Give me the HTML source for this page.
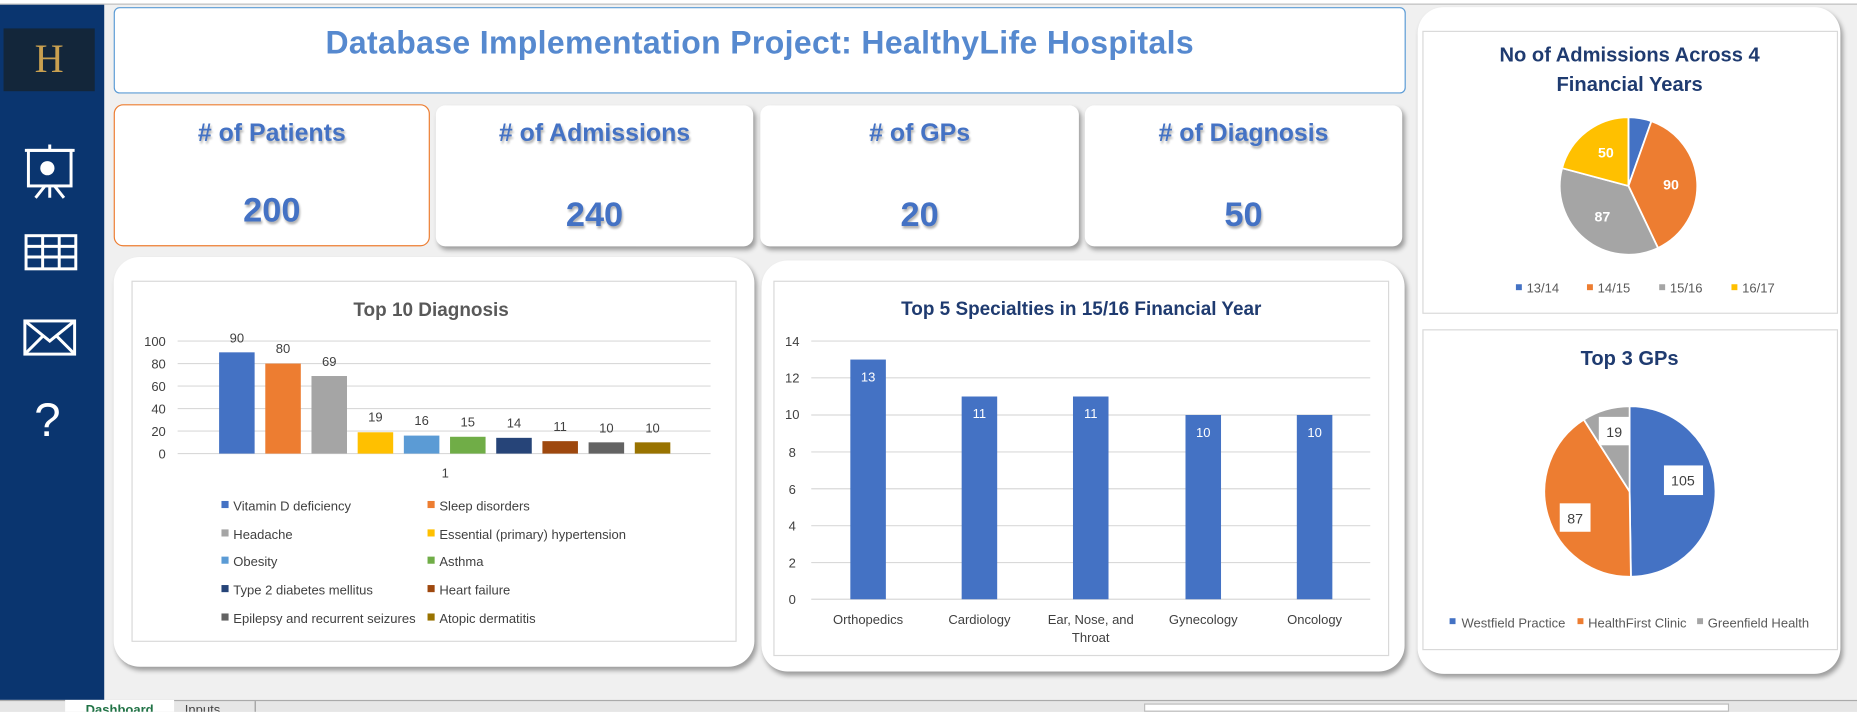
<!DOCTYPE html>
<html><head><meta charset="utf-8"><style>
*{margin:0;padding:0;box-sizing:border-box}
html,body{width:1857px;height:712px;overflow:hidden;background:#f0f0f0;font-family:"Liberation Sans",sans-serif}
#w{position:absolute;left:0;top:0;width:1568px;height:601px;transform:scale(1.18431);transform-origin:0 0;background:#f0f0f0}
.a{position:absolute}
.card{position:absolute;background:#fff;border-radius:8px;box-shadow:2px 3px 4px rgba(0,0,0,.35)}
.kt{position:absolute;left:0;right:0;text-align:center;color:#4472c4;font-weight:bold;text-shadow:1px 2px 2px rgba(0,0,0,.3)}
</style></head><body><div id="w">
<div class="a" style="left:0;top:0;width:1568px;height:4px;background:#fff;border-bottom:1px solid #bbb"></div>
<div class="a" style="left:0;top:4px;width:88px;height:587px;background:#0a356f"></div>
<div class="a" style="left:3px;top:24px;width:77px;height:53px;background:#13263a;color:#c9a050;font-family:'Liberation Serif',serif;font-size:34px;text-align:center;line-height:53px">H</div>
<svg class="a" style="left:0;top:110px" width="88" height="270" fill="none" stroke="#fff" stroke-width="2.5">
<rect x="24" y="17" width="36" height="30"/><line x1="21" y1="17" x2="63" y2="17"/><line x1="42" y1="12" x2="42" y2="17"/>
<circle cx="40" cy="32" r="6" fill="#fff" stroke="none"/><line x1="38" y1="47" x2="30" y2="57"/><line x1="46" y1="47" x2="54" y2="57"/><line x1="42" y1="47" x2="42" y2="57"/>
<rect x="22" y="89" width="42" height="28"/><line x1="22" y1="98" x2="64" y2="98"/><line x1="22" y1="107" x2="64" y2="107"/><line x1="36" y1="89" x2="36" y2="117"/><line x1="50" y1="89" x2="50" y2="117"/>
<rect x="21" y="161" width="42" height="28"/><polyline points="21,161 42,178 63,161"/><line x1="21" y1="189" x2="36" y2="174"/><line x1="63" y1="189" x2="48" y2="174"/>
<text x="40" y="258" fill="#fff" stroke="none" font-size="40" text-anchor="middle" font-family="Liberation Sans">?</text>
</svg>
<div class="a" style="left:96px;top:6px;width:1091px;height:73px;background:#fff;border:1.5px solid #5b9bd5;border-radius:5px"></div>
<div class="a" style="left:96px;top:21px;width:1091px;text-align:center;font-size:27px;font-weight:bold;color:#5689cf;letter-spacing:0.3px">Database Implementation Project: HealthyLife Hospitals</div>

<div class="card" style="left:96px;top:88px;width:267px;height:120px;border:1.5px solid #ed7d31;box-shadow:none"><div class="kt" style="top:12px;font-size:21px"># of Patients</div><div class="kt" style="top:73px;font-size:29px">200</div></div>
<div class="card" style="left:368px;top:89px;width:268px;height:119px"><div class="kt" style="top:12px;font-size:21px"># of Admissions</div><div class="kt" style="top:77px;font-size:29px">240</div></div>
<div class="card" style="left:642px;top:89px;width:269px;height:119px"><div class="kt" style="top:12px;font-size:21px"># of GPs</div><div class="kt" style="top:77px;font-size:29px">20</div></div>
<div class="card" style="left:916px;top:89px;width:268px;height:119px"><div class="kt" style="top:12px;font-size:21px"># of Diagnosis</div><div class="kt" style="top:77px;font-size:29px">50</div></div>

<div class="card" style="left:96px;top:217px;width:541px;height:346px;border-radius:22px"></div>
<div class="card" style="left:643px;top:220px;width:543px;height:347px;border-radius:22px"></div>
<div class="card" style="left:1197px;top:6px;width:357px;height:563px;border-radius:22px"></div>

<svg class="a" style="left:0;top:0" width="1568" height="601" font-family="Liberation Sans">
<rect x="111.5" y="237.5" width="510" height="304" fill="#fff" stroke="#d9d9d9"/>
<text x="364" y="267" text-anchor="middle" font-size="16" font-weight="bold" fill="#595959">Top 10 Diagnosis</text>
<g stroke="#d9d9d9"><line x1="150" y1="288" x2="600" y2="288"/><line x1="150" y1="307" x2="600" y2="307"/><line x1="150" y1="326" x2="600" y2="326"/><line x1="150" y1="345" x2="600" y2="345"/><line x1="150" y1="364" x2="600" y2="364"/><line x1="150" y1="383" x2="600" y2="383"/></g>
<g font-size="11" fill="#404040" text-anchor="end"><text x="140" y="292">100</text><text x="140" y="311">80</text><text x="140" y="330">60</text><text x="140" y="349">40</text><text x="140" y="368">20</text><text x="140" y="387">0</text></g>
<g><rect x="185" y="297.5" width="30" height="85.5" fill="#4472c4"/><rect x="224" y="307" width="30" height="76" fill="#ed7d31"/><rect x="263" y="317.5" width="30" height="65.5" fill="#a5a5a5"/><rect x="302" y="365" width="30" height="18" fill="#ffc000"/><rect x="341" y="367.8" width="30" height="15.2" fill="#5b9bd5"/><rect x="380" y="368.8" width="30" height="14.2" fill="#70ad47"/><rect x="419" y="369.7" width="30" height="13.3" fill="#264478"/><rect x="458" y="372.5" width="30" height="10.5" fill="#9e480e"/><rect x="497" y="373.5" width="30" height="9.5" fill="#636363"/><rect x="536" y="373.5" width="30" height="9.5" fill="#997300"/></g>
<g font-size="11" fill="#404040" text-anchor="middle"><text x="200" y="289">90</text><text x="239" y="298">80</text><text x="278" y="309">69</text><text x="317" y="356">19</text><text x="356" y="359">16</text><text x="395" y="360">15</text><text x="434" y="361">14</text><text x="473" y="364">11</text><text x="512" y="365">10</text><text x="551" y="365">10</text><text x="376" y="403">1</text></g>
<g font-size="11" fill="#404040">
<rect x="187" y="423" width="6" height="6" fill="#4472c4"/><text x="197" y="431">Vitamin D deficiency</text>
<rect x="361" y="423" width="6" height="6" fill="#ed7d31"/><text x="371" y="431">Sleep disorders</text>
<rect x="187" y="447" width="6" height="6" fill="#a5a5a5"/><text x="197" y="455">Headache</text>
<rect x="361" y="447" width="6" height="6" fill="#ffc000"/><text x="371" y="455">Essential (primary) hypertension</text>
<rect x="187" y="470" width="6" height="6" fill="#5b9bd5"/><text x="197" y="478">Obesity</text>
<rect x="361" y="470" width="6" height="6" fill="#70ad47"/><text x="371" y="478">Asthma</text>
<rect x="187" y="494" width="6" height="6" fill="#264478"/><text x="197" y="502">Type 2 diabetes mellitus</text>
<rect x="361" y="494" width="6" height="6" fill="#9e480e"/><text x="371" y="502">Heart failure</text>
<rect x="187" y="518" width="6" height="6" fill="#636363"/><text x="197" y="526">Epilepsy and recurrent seizures</text>
<rect x="361" y="518" width="6" height="6" fill="#997300"/><text x="371" y="526">Atopic dermatitis</text></g>
<rect x="653.5" y="237.5" width="519" height="316" fill="#fff" stroke="#d9d9d9"/>
<text x="913" y="266" text-anchor="middle" font-size="16" font-weight="bold" fill="#1f3b70">Top 5 Specialties in 15/16 Financial Year</text>
<g stroke="#d9d9d9"><line x1="685" y1="288" x2="1157" y2="288"/><line x1="685" y1="319" x2="1157" y2="319"/><line x1="685" y1="350.4" x2="1157" y2="350.4"/><line x1="685" y1="381.6" x2="1157" y2="381.6"/><line x1="685" y1="412.7" x2="1157" y2="412.7"/><line x1="685" y1="443.9" x2="1157" y2="443.9"/><line x1="685" y1="475" x2="1157" y2="475"/><line x1="685" y1="506" x2="1157" y2="506"/></g>
<g font-size="11" fill="#404040" text-anchor="middle"><text x="669" y="292">14</text><text x="669" y="323">12</text><text x="669" y="354">10</text><text x="669" y="386">8</text><text x="669" y="417">6</text><text x="669" y="448">4</text><text x="669" y="479">2</text><text x="669" y="510">0</text></g>
<g fill="#4472c4"><rect x="718" y="303.6" width="30" height="202.4"/><rect x="812" y="334.8" width="30" height="171.2"/><rect x="906" y="334.8" width="30" height="171.2"/><rect x="1001" y="350.4" width="30" height="155.6"/><rect x="1095" y="350.4" width="30" height="155.6"/></g>
<g font-size="11" fill="#fff" text-anchor="middle"><text x="733" y="322">13</text><text x="827" y="353">11</text><text x="921" y="353">11</text><text x="1016" y="369">10</text><text x="1110" y="369">10</text></g>
<g font-size="11" fill="#404040" text-anchor="middle"><text x="733" y="527">Orthopedics</text><text x="827" y="527">Cardiology</text><text x="921" y="527">Ear, Nose, and</text><text x="921" y="542">Throat</text><text x="1016" y="527">Gynecology</text><text x="1110" y="527">Oncology</text></g>
<rect x="1201.5" y="26.5" width="350" height="238" fill="#fff" stroke="#d9d9d9"/>
<text x="1376" y="52" text-anchor="middle" font-size="17" font-weight="bold" fill="#1f3b70">No of Admissions Across 4</text>
<text x="1376" y="77" text-anchor="middle" font-size="17" font-weight="bold" fill="#1f3b70">Financial Years</text>
<g transform="translate(1375,157)" stroke="#fff" stroke-width="1.5">
<path d="M0,0 L0,-58 A58,58 0 0 1 19.4,-54.7Z" fill="#4472c4"/>
<path d="M0,0 L19.4,-54.7 A58,58 0 0 1 25,52.4Z" fill="#ed7d31"/>
<path d="M0,0 L25,52.4 A58,58 0 0 1 -56,-15Z" fill="#a5a5a5"/>
<path d="M0,0 L-56,-15 A58,58 0 0 1 0,-58Z" fill="#ffc000"/></g>
<g font-size="12" font-weight="bold" fill="#fff" text-anchor="middle"><text x="1411" y="160">90</text><text x="1353" y="187">87</text><text x="1356" y="133">50</text></g>
<g font-size="11" fill="#595959"><rect x="1280" y="240" width="5" height="5" fill="#4472c4"/><text x="1289" y="247">13/14</text><rect x="1340" y="240" width="5" height="5" fill="#ed7d31"/><text x="1349" y="247">14/15</text><rect x="1401" y="240" width="5" height="5" fill="#a5a5a5"/><text x="1410" y="247">15/16</text><rect x="1462" y="240" width="5" height="5" fill="#ffc000"/><text x="1471" y="247">16/17</text></g>
<rect x="1201.5" y="278.5" width="350" height="270" fill="#fff" stroke="#d9d9d9"/>
<text x="1376" y="308" text-anchor="middle" font-size="17" font-weight="bold" fill="#1f3b70">Top 3 GPs</text>
<g transform="translate(1376,415)" stroke="#fff" stroke-width="1.5">
<path d="M0,0 L0,-72 A72,72 0 0 1 1.1,72Z" fill="#4472c4"/>
<path d="M0,0 L1.1,72 A72,72 0 0 1 -38.7,-60.7Z" fill="#ed7d31"/>
<path d="M0,0 L-38.7,-60.7 A72,72 0 0 1 0,-72Z" fill="#a5a5a5"/></g>
<g font-size="12" fill="#404040" text-anchor="middle">
<rect x="1405" y="393" width="33" height="25" fill="#fff"/><text x="1421" y="410">105</text>
<rect x="1317" y="425" width="26" height="24" fill="#fff"/><text x="1330" y="442">87</text>
<rect x="1350" y="352" width="26" height="24" fill="#fff"/><text x="1363" y="369">19</text></g>
<g font-size="11" fill="#595959"><rect x="1224" y="522" width="5" height="5" fill="#4472c4"/><text x="1234" y="530">Westfield Practice</text><rect x="1332" y="522" width="5" height="5" fill="#ed7d31"/><text x="1341" y="530">HealthFirst Clinic</text><rect x="1433" y="522" width="5" height="5" fill="#a5a5a5"/><text x="1442" y="530">Greenfield Health</text></g>
</svg>
<div class="a" style="left:0;top:591px;width:1568px;height:10px;background:#e6e6e6;border-top:1px solid #aaa"></div>
<div class="a" style="left:55px;top:591px;width:92px;height:10px;background:#fff;color:#217346;font-size:11px;font-weight:bold;line-height:18px;text-align:center;overflow:hidden">Dashboard</div>
<div class="a" style="left:148px;top:592px;width:68px;height:9px;font-size:11px;color:#444;line-height:16px;padding-left:8px;overflow:hidden;border-right:1px solid #999">Inputs</div>
<div class="a" style="left:966px;top:594px;width:494px;height:7px;background:#fff;border:1px solid #bbb"></div>
</div></body></html>
